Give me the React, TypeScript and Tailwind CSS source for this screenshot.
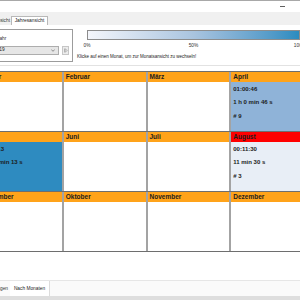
import React from "react";

type Month = {
  name: string;
  header?: string;
  body?: string;
  lines?: string[];
};

const months: Month[] = [
  { name: "Januar" },
  { name: "Februar" },
  { name: "März" },
  { name: "April", body: "bg-[#8fb3d8]", lines: ["01:00:46", "1 h 0 min 46 s", "# 9"] },
  { name: "Mai", body: "bg-[#2e8bc0]", lines: ["01:24:13", "1 h 24 min 13 s", "# 11"] },
  { name: "Juni" },
  { name: "Juli" },
  { name: "August", header: "bg-[#ff0000]", body: "bg-[#e8eef6]", lines: ["00:11:30", "11 min 30 s", "# 3"] },
  { name: "September" },
  { name: "Oktober" },
  { name: "November" },
  { name: "Dezember" },
];

function Cell({ m, first }: { m: Month; first: boolean }) {
  return (
    <div className={`flex flex-col ${first ? "" : "border-l-2 border-[#a3a3a3]"}`}>
      <div
        className={`h-[10px] flex items-center pl-[2px] text-[6.5px] font-bold text-[#1c1c1c] ${
          m.header ?? "bg-[#ffa31a]"
        }`}
      >
        {m.name}
      </div>
      <div className={`h-[49px] pl-[2px] pt-[1px] ${m.body ?? "bg-white"}`}>
        {m.lines?.map((l) => (
          <div key={l} className="text-[6px] font-bold leading-[13.3px] text-[#1c1c1c]">
            {l}
          </div>
        ))}
      </div>
    </div>
  );
}

export default function App() {
  const rows = [months.slice(0, 4), months.slice(4, 8), months.slice(8, 12)];
  return (
    <div className="w-[300px] h-[300px] overflow-hidden bg-white flex flex-col font-['Liberation_Sans',Arial,sans-serif] text-[#222]">
      <div className="h-px bg-[#a8a8a8] shrink-0" />
      {/* title bar */}
      <div className="h-[11px] shrink-0 flex justify-end items-start">
        <div className="w-[5px] h-px bg-[#606060] mt-[5px] mr-[15px]" />
      </div>
      {/* tab strip */}
      <div className="h-[13px] shrink-0 bg-[#f0f0f0] flex items-end">
        <div className="-ml-[30px] w-[41px] h-[9px] flex items-center justify-end pr-[1px] text-[4.8px] text-[#333]">
          Monatsansicht
        </div>
        <div className="h-[9px] w-[37px] bg-white border border-b-0 border-[#b8b8b8] flex items-center justify-center text-[4.8px] text-[#222]">
          Jahresansicht
        </div>
      </div>
      {/* tab page */}
      <div className="flex-1 flex flex-col">
        <div className="flex pt-[4px]">
          {/* group box */}
          <div className="-ml-[16px] w-[92px] h-[33px] border border-[#9c9c9c] flex flex-col pl-[12px]">
            <div className="text-[4.8px] text-[#333] leading-none mt-[7px]">Jahr</div>
            <div className="flex items-center mt-[4px] -ml-[7px]">
              <div className="w-[69px] h-[9px] bg-[#e6e6e6] border border-[#adadad] flex items-center justify-between pl-[3px] pr-[3px]">
                <span className="text-[4.8px] text-[#222] leading-none">2019</span>
                <svg width="4" height="3" viewBox="0 0 4 3">
                  <path d="M0.3 0.5 L2 2.3 L3.7 0.5" fill="none" stroke="#555" strokeWidth="0.6" />
                </svg>
              </div>
              <div className="ml-[3px] w-[7px] h-[9px] bg-[#ececec] border border-[#c6c6c6] flex items-center justify-center">
                <svg width="4" height="5" viewBox="0 0 4 5">
                  <path d="M0.5 0.5 L0.5 4.5 M1.2 0.8 L3.4 2.5 L1.2 4.2 Z" fill="none" stroke="#8a8a8a" strokeWidth="0.5" />
                </svg>
              </div>
            </div>
          </div>
          {/* legend */}
          <div className="ml-[4px] flex flex-col">
            <div className="ml-[10px] w-[213px] h-[10px] mt-[1px] border border-[#8c8c8c] bg-gradient-to-r from-[#f4f6fb] via-[#a9c4df] to-[#2a8cc0]" />
            <div className="relative ml-[10px] w-[213px] h-[10px] text-[4.8px] text-[#333]">
              <span className="absolute left-0 top-[2px] -translate-x-1/2">0%</span>
              <span className="absolute left-1/2 top-[2px] -translate-x-1/2">50%</span>
              <span className="absolute left-full top-[2px] -translate-x-1/2">100%</span>
            </div>
            <div className="mt-[5px] text-[4.5px] text-[#222] leading-none whitespace-nowrap">
              Klicke auf einen Monat, um zur Monatsansicht zu wechseln!
            </div>
          </div>
        </div>
        <div className="h-px bg-[#e2e2e2] mt-[3px]" />
        {/* year grid */}
        <div className="mt-[5px] -ml-[22px] w-[335px] border-t border-b border-[#6e6e6e]">
          {rows.map((r, i) => (
            <div
              key={i}
              className={`grid grid-cols-4 ${i > 0 ? "border-t border-[#6e6e6e]" : ""}`}
            >
              {r.map((m, j) => (
                <Cell key={m.name} m={m} first={j === 0} />
              ))}
            </div>
          ))}
        </div>
        <div className="flex-1" />
        {/* bottom tab strip */}
        <div className="h-px bg-[#e6e6e6]" />
        <div className="h-[15px] bg-[#fafafa] flex items-stretch">
          <div className="-ml-[20px] w-[30px] flex items-center justify-end pr-[2px] text-[4.8px] text-[#333]">
            Nach Tagen
          </div>
          <div className="w-[40px] bg-white border-r border-[#dcdcdc] flex items-center justify-center text-[4.8px] text-[#222]">
            Nach Monaten
          </div>
        </div>
        <div className="h-[4px] bg-[#dedede]" />
      </div>
    </div>
  );
}
